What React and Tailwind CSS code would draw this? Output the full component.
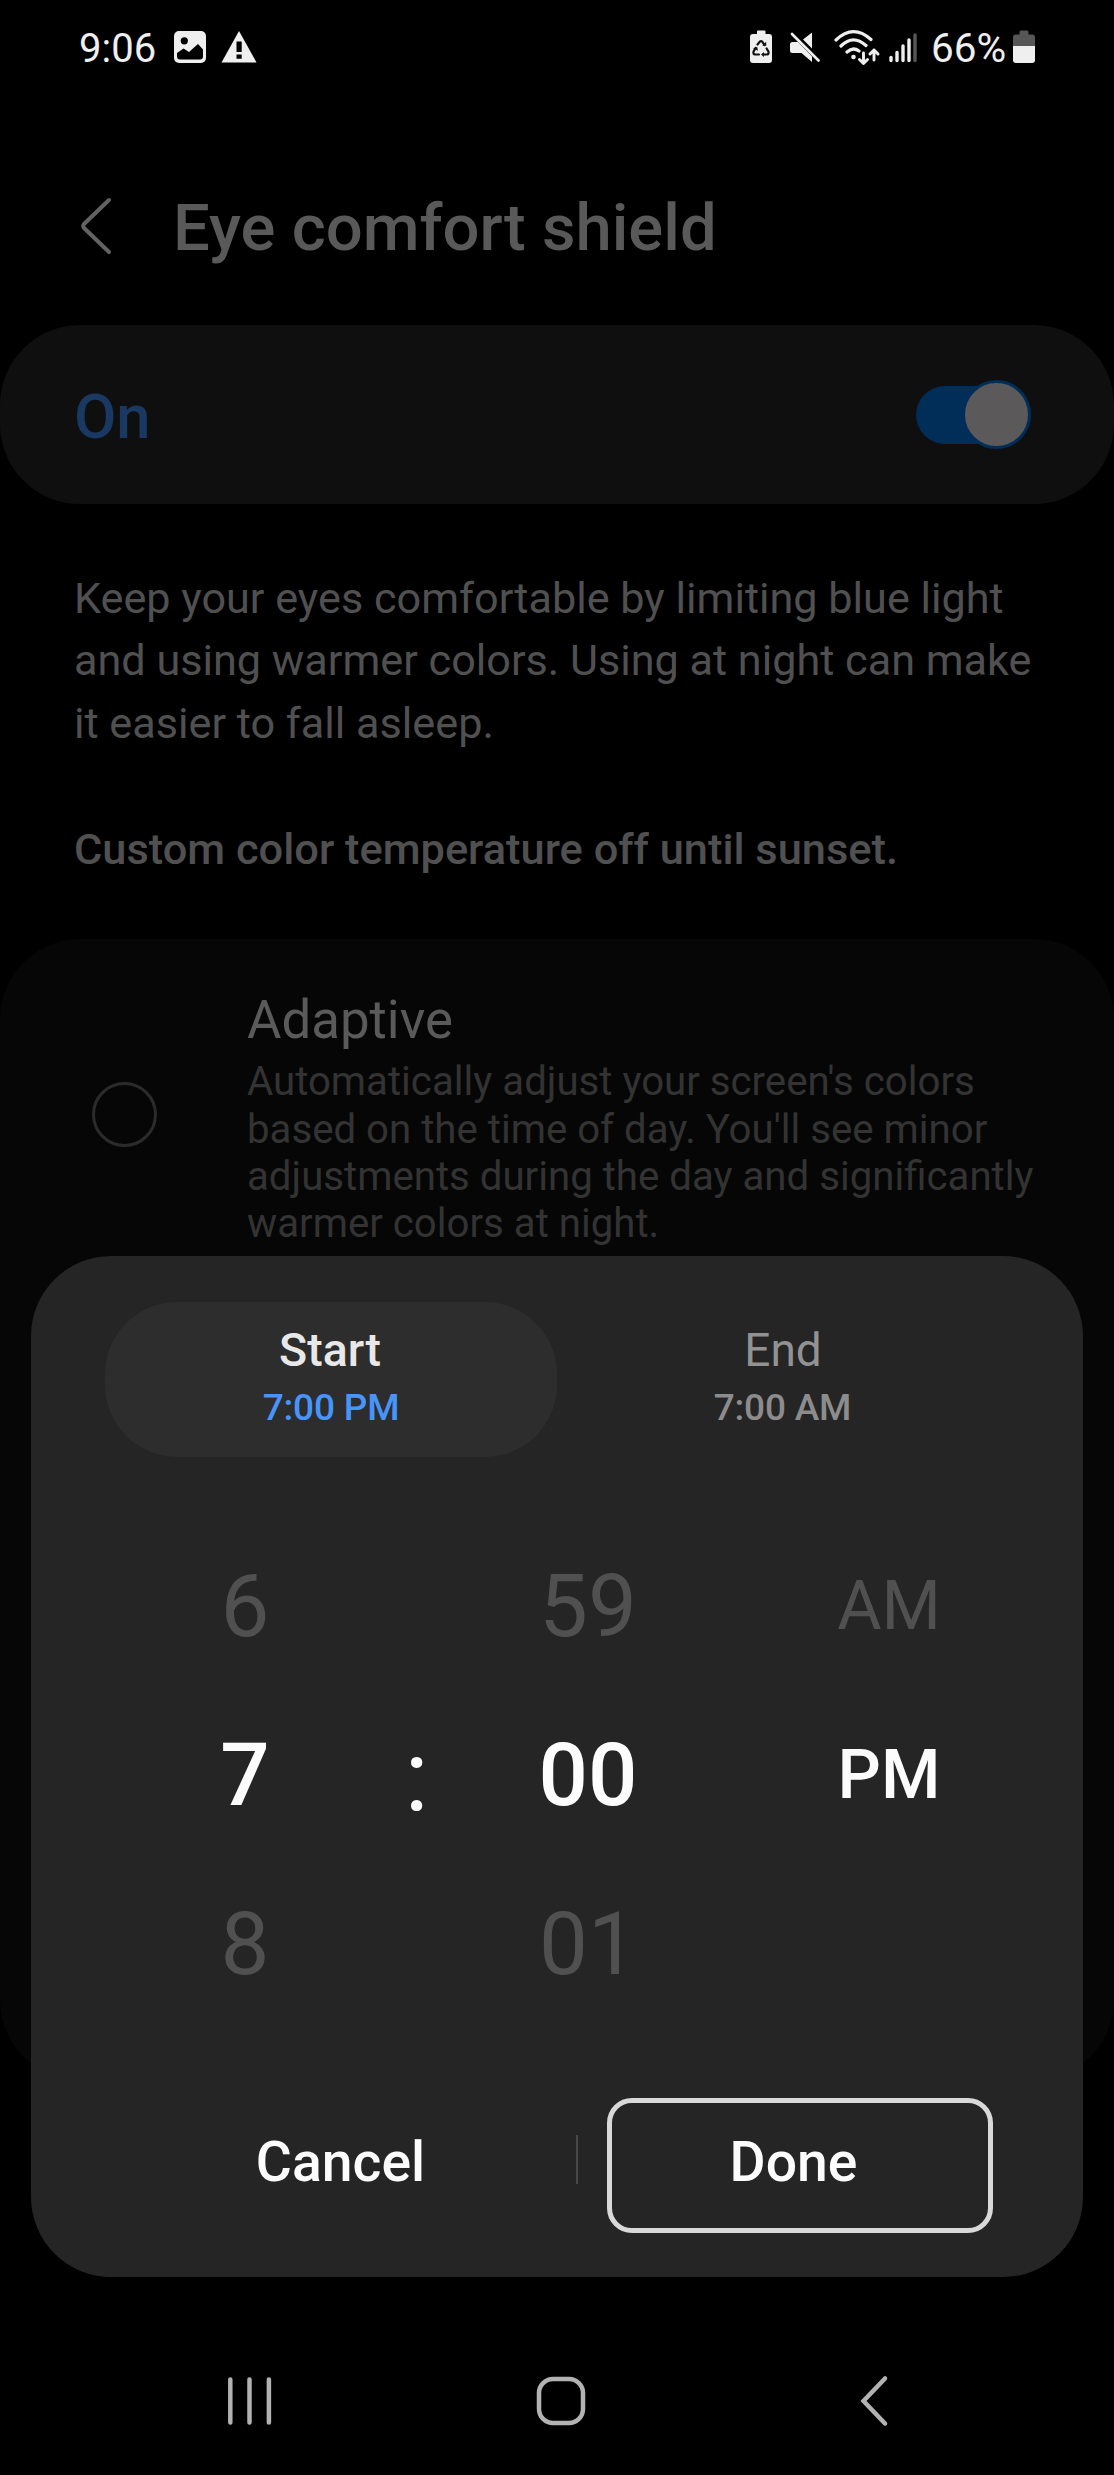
import React from "react";

function ImageIcon() {
  return (
    <svg className="ml-[19px] h-8 w-8" viewBox="0 0 32 32">
      <rect width="32" height="32" rx="5" fill="#efefef" />
      <circle cx="10.3" cy="9.8" r="3.6" fill="#000" />
      <path d="M3 22 9.5 17.5 15 21 24 13 29 18.5V25.5Q29 28.5 26 28.5H6Q3 28.5 3 25.5Z" fill="#000" />
    </svg>
  );
}

function WarningIcon() {
  return (
    <svg className="ml-[15px] h-8 w-9" viewBox="0 0 36 32">
      <path d="M18 0 35.5 31.500H.5Z" fill="#efefef" />
      <path d="M15.500 10.500h5.200V21h-5.200zM15.500 23.500h5.200v4.300h-5.200z" fill="#000" />
    </svg>
  );
}

function BatterySaverIcon() {
  return (
    <svg className="h-[34px] w-6" viewBox="0 0 24 34">
      <path d="M8 1.5Q8 .5 9 .5h6.500Q16.500 .5 16.500 1.500V4H20q3 0 3 3v23q0 3-3 3H4q-3 0-3-3V7q0-3 3-3h4z" fill="#efefef" />
      <g fill="none" stroke="#111" strokeWidth="2.2" strokeLinecap="round" strokeLinejoin="round">
        <path d="M8.500 14.500 10.800 11.600Q12 10.600 13.200 11.600L15.500 15" />
        <path d="M17.600 18.500 19.500 21.600Q20 24.200 18 24.500H14.500" />
        <path d="M10 24.500H6Q4 24.200 4.500 21.600L6.600 18" />
      </g>
      <path d="M13.200 15.800h4v-4zM15 22v5l-3-2.500zM4 18.200l4.200-1.200.8 3.800z" fill="#111" />
    </svg>
  );
}

function MuteIcon() {
  return (
    <svg className="ml-4 h-8 w-8" viewBox="0 0 32 32">
      <path d="M1 13.500Q1 11 3.500 11H9L23 25.500V31L12.500 22H3.500Q1 22 1 19.500zM14 8.500 23 1.500V17.500Z" fill="#efefef" />
      <path d="M3 3 29.500 29.500" stroke="#efefef" strokeWidth="2.700" strokeLinecap="round" />
      <path d="M6 2.500 31 27.500" stroke="#000" strokeWidth="1.200" />
    </svg>
  );
}

function WifiIcon() {
  return (
    <svg className="ml-[13px] h-9 w-[46px]" viewBox="0 0 46 36" fill="none" stroke="#efefef" strokeWidth="3.200" strokeLinecap="round" strokeLinejoin="round">
      <path d="M2 11Q19 -5.500 37 10.500M7 17Q19 5 32 16.500M13 23Q19 17.500 25 22" />
      <circle cx="19.500" cy="28" r="2.300" fill="#efefef" stroke="none" />
      <path d="M29.500 24V34M25.500 30.500 29.500 34.500 33.500 30.500M40 31V21M36 25 40 21 44 25" strokeWidth="2.900" />
    </svg>
  );
}

function SignalIcon() {
  return (
    <svg className="ml-[9px] h-8 w-7" viewBox="0 0 28 32" stroke="#efefef" strokeWidth="3.400" strokeLinecap="round">
      <path d="M2 26.500V29.500M8 21.500V29.500M14 15V29.500M20 9V29.500" />
      <path d="M26 4V29.500" stroke="#565656" />
    </svg>
  );
}

function BatteryIcon() {
  return (
    <svg className="ml-[7px] h-[34px] w-6" viewBox="0 0 24 34">
      <path d="M7.500 2Q7.500 .5 9 .5h6q1.500 0 1.500 1.500V4.500H20q3 0 3 3V16H1V7.500q0-3 3-3h3.500z" fill="#565656" />
      <path d="M1 16H23V30q0 3-3 3H4q-3 0-3-3z" fill="#efefef" />
    </svg>
  );
}

function StatusBar() {
  return (
    <div className="flex h-[94px] items-center pl-[79px] pr-[78px] text-[#efefef]">
      <span className="mt-[3px] w-[76px] whitespace-nowrap text-[40px] leading-none">9:06</span>
      <ImageIcon />
      <WarningIcon />
      <div className="flex-1" />
      <BatterySaverIcon />
      <MuteIcon />
      <WifiIcon />
      <SignalIcon />
      <span className="ml-[14px] mt-[3px] w-[74px] whitespace-nowrap text-[40.5px] leading-none">66%</span>
      <BatteryIcon />
    </div>
  );
}

function Column({ className, items }) {
  return (
    <div className={"flex flex-col text-center " + className}>
      {items.map((t, i) => (
        <div key={i} className={i === 1 ? "h-[168.8px] font-medium leading-[168.8px] text-[#fcfcfc]" : "h-[168.8px] leading-[168.8px] text-[#505050]"}>
          {t}
        </div>
      ))}
    </div>
  );
}

function TimeDialog() {
  return (
    <div className="absolute left-[31px] top-[1256px] flex h-[1021px] w-[1052px] flex-col rounded-[80px] bg-[#252525] pl-[74px] pt-[46px]">
      <div className="flex">
        <div className="h-[155px] w-[452px] rounded-[72px] bg-[#2d2d2d] pt-5 text-center font-medium">
          <div className="pr-[2px] text-[46.5px] leading-[56px] text-[#e8e8e8]">Start</div>
          <div className="mt-[8px] text-[37px] leading-[44px] tracking-[-0.2px] text-[#4795fb]">7:00 PM</div>
        </div>
        <div className="h-[155px] w-[452px] pt-5 text-center">
          <div className="text-[46px] leading-[56px] text-[#929292]">End</div>
          <div className="mt-[8px] pr-px text-[37px] font-medium leading-[44px] tracking-[-0.2px] text-[#8c8c8c]">7:00 AM</div>
        </div>
      </div>
      <div className="mt-[65px] flex h-[506.4px]">
        <Column className="w-[280px] text-[87px]" items={["6", "7", "8"]} />
        <div className="h-[506.4px] w-[63px] text-center text-[100px] leading-[507px] text-[#fcfcfc]">:</div>
        <Column className="w-[280px] text-[87px]" items={["59", "00", "01"]} />
        <Column className="w-[322px] text-[68px]" items={["AM", "PM"]} />
      </div>
      <div className="mt-[69.6px] flex h-[135px] items-center text-[55.3px] font-medium text-[#fcfcfc]">
        <button className="w-[471px] pb-[4px]">Cancel</button>
        <div className="mb-[12px] h-[49px] w-[2px] bg-[#484848]" />
        <button className="ml-[29px] h-[135px] w-[386px] rounded-[25px] border-[5px] border-[#d9d9d9] pb-[4px] pr-[13px]">Done</button>
      </div>
    </div>
  );
}

export default function App() {
  return (
    <div className="relative flex h-[2475px] w-[1114px] flex-col overflow-hidden bg-black font-[Roboto,sans-serif]">
      <StatusBar />
      <div className="mt-[74px] flex h-[120px] items-center">
        <svg className="-mt-1 ml-[79px] h-[60px] w-[34px]" viewBox="0 0 34 60" fill="none" stroke="#626262" strokeWidth="4" strokeLinecap="round" strokeLinejoin="round">
          <path d="M30 4 5 28Q3.500 30 5 32L30 56" />
        </svg>
        <h1 className="ml-[60px] whitespace-nowrap text-[65.2px] font-medium leading-[120px] text-[#595959]">Eye comfort shield</h1>
      </div>
      <div className="mt-[37px] flex h-[179px] items-center justify-between rounded-[80px] bg-[#0f0f0f] pl-[74px] pr-[83px]">
        <span className="mt-[6px] text-[61.5px] font-medium text-[#193963]">On</span>
        <div className="flex h-[58px] w-[115px] items-center justify-end rounded-full bg-[#002e58]">
          <div className="h-[69px] w-[69px] shrink-0 rounded-full border-[3.5px] border-[#002e58] bg-[#5b5959]" />
        </div>
      </div>
      <div className="mt-[63.5px] whitespace-nowrap pl-[74px] text-[43.2px] leading-[62.85px] text-[#505050]">
        <p>
          Keep your eyes comfortable by limiting blue light
          <br />
          and using warmer colors. Using at night can make
          <br />
          it easier to fall asleep.
        </p>
        <p className="mt-[62.85px] text-[43.4px] font-medium">Custom color temperature off until sunset.</p>
      </div>
      <div className="mt-[57px] flex h-[1141px] shrink-0 rounded-[80px] bg-[#060606] pl-[91.5px]">
        <div className="mt-[143.5px] h-[65px] w-[65px] rounded-full border-[3px] border-[#2b2b2b]" />
        <div className="ml-[90.5px] whitespace-nowrap pt-[51px]">
          <div className="text-[52.8px] leading-[60px] text-[#5a5a5a]">Adaptive</div>
          <p className="mt-[8.5px] text-[40.2px] leading-[47.4px] text-[#333]">
            Automatically adjust your screen's colors
            <br />
            based on the time of day. You'll see minor
            <br />
            adjustments during the day and significantly
            <br />
            warmer colors at night.
          </p>
        </div>
      </div>
      <TimeDialog />
      <div className="mt-auto flex h-[148px] shrink-0 items-center justify-between pl-[226px] pr-[224px]">
        <svg className="h-[52px] w-[47px]" viewBox="0 0 47 52" stroke="#b2b2b2" strokeWidth="4.500" strokeLinecap="round">
          <path d="M4.300 4.500V47.500M23.500 4.500V47.500M42.900 4.500V47.500" />
        </svg>
        <svg className="mr-[12px] h-[52px] w-[52px]" viewBox="0 0 52 52" fill="none" stroke="#b2b2b2" strokeWidth="4.500">
          <rect x="4" y="4" width="44" height="44" rx="14" />
        </svg>
        <svg className="h-[52px] w-[30px]" viewBox="0 0 30 52" fill="none" stroke="#b2b2b2" strokeWidth="4.500" strokeLinecap="round">
          <path d="M25 3.500 3.500 26 25 48.500" />
        </svg>
      </div>
    </div>
  );
}
